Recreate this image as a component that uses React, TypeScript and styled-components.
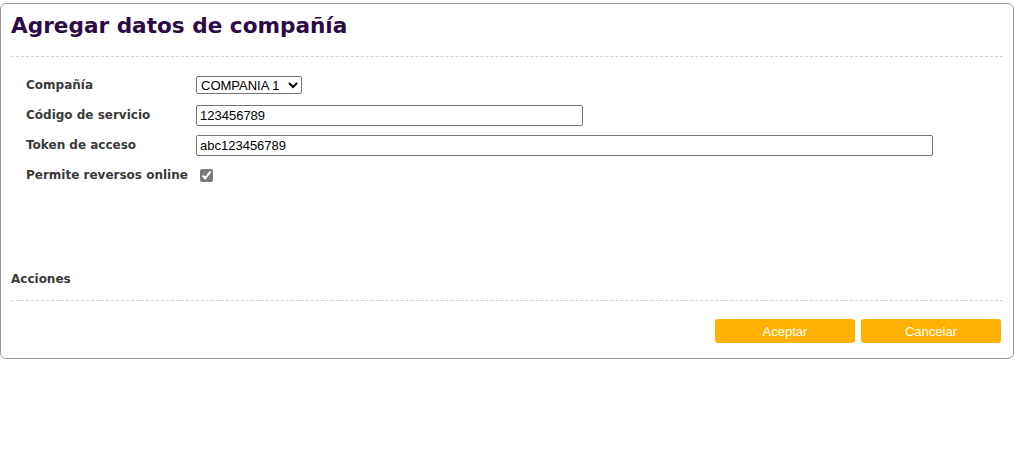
import React from "react";
import styled, { createGlobalStyle } from "styled-components";

const GlobalStyle = createGlobalStyle`
  body {
    margin: 0;
    background: #ffffff;
    font-family: "DejaVu Sans", Verdana, sans-serif;
  }
`;

type Field = {
  label: string;
  kind: "select" | "text" | "check";
  value?: string;
  width?: number;
};

const fields: Field[] = [
  { label: "Compañía", kind: "select", value: "COMPANIA 1" },
  { label: "Código de servicio", kind: "text", value: "123456789", width: 387 },
  { label: "Token de acceso", kind: "text", value: "abc123456789", width: 737 },
  { label: "Permite reversos online", kind: "check" },
];

const App = () => {
  return (
    <>
      <GlobalStyle />
      <Panel>
        <Title>Agregar datos de compañía</Title>
        <Divider />
        <Form>
          {fields.map((f) => (
            <Row key={f.label}>
              <Label>{f.label}</Label>
              {f.kind === "select" && (
                <Select defaultValue={f.value}>
                  <option>COMPANIA 1</option>
                  <option>COMPANIA 2</option>
                </Select>
              )}
              {f.kind === "text" && (
                <TextInput $width={f.width} defaultValue={f.value} />
              )}
              {f.kind === "check" && <Check type="checkbox" defaultChecked />}
            </Row>
          ))}
        </Form>
        <SectionTitle>Acciones</SectionTitle>
        <Divider />
        <ButtonBar>
          <Button>Aceptar</Button>
          <Button>Cancelar</Button>
        </ButtonBar>
      </Panel>
    </>
  );
};

export default App;

const Panel = styled.div`
  width: 1012px;
  margin-top: 3px;
  border: 1px solid #9a9a9a;
  border-radius: 6px;
  padding: 4px 0 15px;
  display: flex;
  flex-direction: column;
`;

const Title = styled.h1`
  margin: 0;
  padding: 0 10px;
  height: 36px;
  line-height: 36px;
  font-size: 21.6px;
  font-weight: bold;
  color: #2b0a46;
  white-space: nowrap;
`;

const Divider = styled.hr`
  margin: 12px 10px 0;
  border: none;
  border-top: 1px dashed #d2d2d2;
  height: 0;
`;

const Form = styled.div`
  display: flex;
  flex-direction: column;
  padding: 13px 0 0 25px;
`;

const Row = styled.div`
  display: flex;
  align-items: center;
  height: 30px;
`;

const Label = styled.span`
  width: 170px;
  font-size: 12px;
  font-weight: bold;
  color: #3a3a3a;
  white-space: nowrap;
`;

const Select = styled.select`
  font-family: "Liberation Sans", Arial, sans-serif;
  font-size: 13px;
  height: 18px;
  width: 106px;
  padding: 0;
  color: #000;
  border: 1px solid #767676;
  border-radius: 2px;
  background: #fff;
`;

const TextInput = styled.input<{ $width?: number }>`
  box-sizing: border-box;
  width: ${(p) => p.$width ?? 200}px;
  height: 21px;
  padding: 1px 3px;
  font-family: "Liberation Sans", Arial, sans-serif;
  font-size: 13px;
  color: #000;
  border: 1px solid #767676;
  border-radius: 2px;
`;

const Check = styled.input`
  margin: 0 0 0 4px;
  width: 13px;
  height: 13px;
  accent-color: #7a7a7a;
`;

const SectionTitle = styled.div`
  margin-top: 80px;
  padding: 0 10px;
  height: 18px;
  line-height: 18px;
  font-size: 12px;
  font-weight: bold;
  color: #3a3a3a;
`;

const ButtonBar = styled.div`
  display: flex;
  justify-content: flex-end;
  gap: 6px;
  padding: 18px 12px 0;
`;

const Button = styled.button`
  width: 140px;
  height: 24px;
  border: none;
  border-radius: 3px;
  background: #ffb300;
  color: #ffffff;
  font-family: "Liberation Sans", Arial, sans-serif;
  font-size: 13px;
  cursor: pointer;
`;
